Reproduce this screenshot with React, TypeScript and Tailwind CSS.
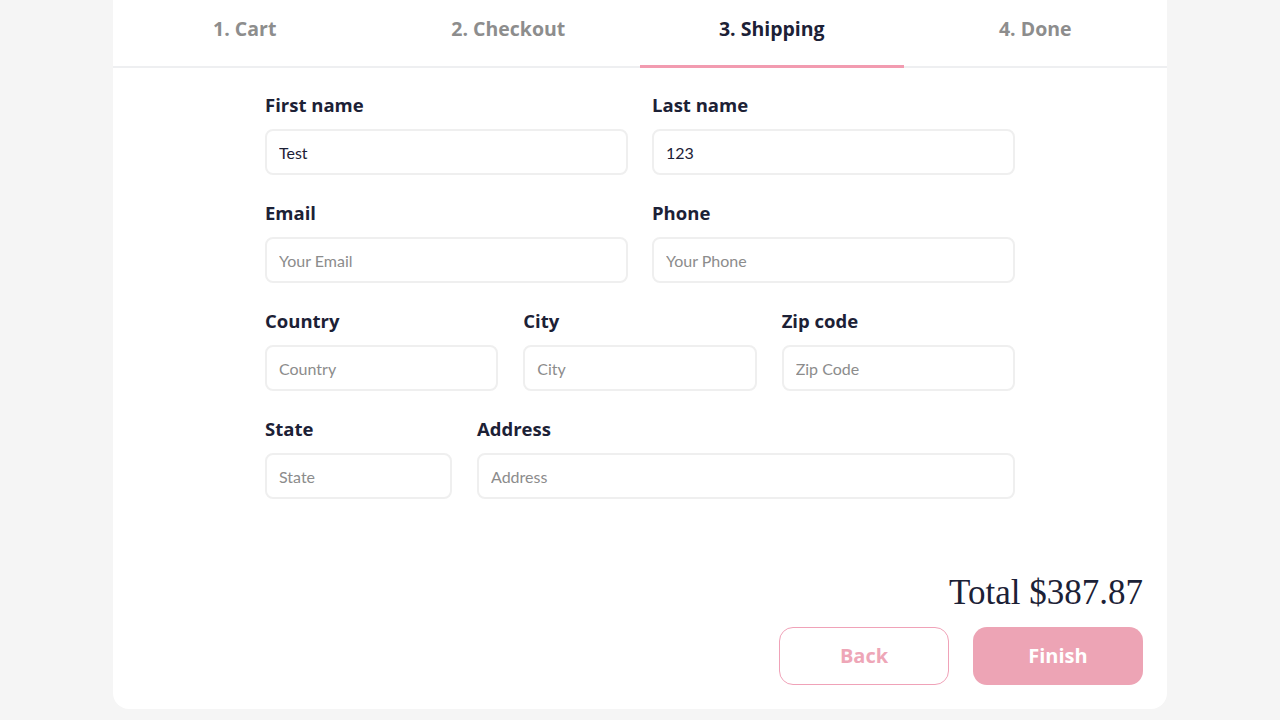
const steps = ["1. Cart", "2. Checkout", "3. Shipping", "4. Done"];
const active = 2;

const labelCls =
  "block h-6 leading-6 text-[18.5px] font-bold text-[#1c2136] mb-3 font-['Open_Sans',sans-serif]";
const inputCls =
  "w-full h-[46px] rounded-lg border-2 border-[#efefef] bg-white px-[12px] text-[16px] text-[#1c2136] placeholder:text-[#8c8c8c] outline-none";

function Field({
  label,
  placeholder,
  value,
  className = "",
}: {
  label: string;
  placeholder: string;
  value?: string;
  className?: string;
}) {
  return (
    <div className={className}>
      <label className={labelCls}>{label}</label>
      <input className={inputCls} placeholder={placeholder} defaultValue={value} />
    </div>
  );
}

export default function App() {
  return (
    <div className="min-h-[720px] bg-[#f5f5f5] pb-[10px] font-['Lato',sans-serif]">
      <div className="mx-auto w-[1054px] bg-white rounded-b-2xl">
        <div className="flex font-['Open_Sans',sans-serif]">
          {steps.map((s, i) => (
            <div
              key={s}
              className={`flex-1 h-[68px] pt-[16px] text-center text-[19.5px] leading-[26px] font-bold ${
                i === active
                  ? "border-b-[3px] border-[#f29bb0] text-[#1c2136]"
                  : "border-b-2 border-[#eeeff1] text-[#8d8d8d]"
              }`}
            >
              {s}
            </div>
          ))}
        </div>

        <div className="w-[750px] mx-auto pt-[25px] flex flex-col gap-[26px]">
          <div className="flex gap-6">
            <Field className="flex-1" label="First name" placeholder="First name" value="Test" />
            <Field className="flex-1" label="Last name" placeholder="Last name" value="123" />
          </div>
          <div className="flex gap-6">
            <Field className="flex-1" label="Email" placeholder="Your Email" />
            <Field className="flex-1" label="Phone" placeholder="Your Phone" />
          </div>
          <div className="flex gap-[25px]">
            <Field className="flex-1" label="Country" placeholder="Country" />
            <Field className="flex-1" label="City" placeholder="City" />
            <Field className="flex-1" label="Zip code" placeholder="Zip Code" />
          </div>
          <div className="flex gap-[25px]">
            <Field className="w-[187px]" label="State" placeholder="State" />
            <Field className="flex-1" label="Address" placeholder="Address" />
          </div>
        </div>

        <div className="flex flex-col items-end px-6 pt-[74px] pb-6">
          <div className="font-['Liberation_Serif',serif] text-[35px] leading-[40px] text-[#1c2136]">
            Total $387.87
          </div>
          <div className="flex gap-6 mt-[14px]">
            <button className="w-[170px] h-[58px] rounded-[14px] border border-[#f0a2b8] text-[#eea6b7] text-[20px] font-bold bg-white font-['Open_Sans',sans-serif]">
              Back
            </button>
            <button className="w-[170px] h-[58px] rounded-[14px] bg-[#eda4b5] text-white text-[20px] font-bold font-['Open_Sans',sans-serif]">
              Finish
            </button>
          </div>
        </div>
      </div>
    </div>
  );
}
